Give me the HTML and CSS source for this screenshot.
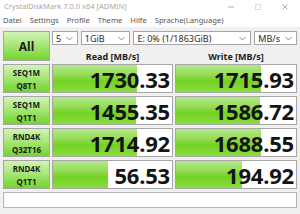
FILE: index.html
```html
<!DOCTYPE html>
<html>
<head>
<meta charset="utf-8">
<link rel="stylesheet" href="styles.css">
</head>
<body>
<div class="window">
  <div class="titlebar">
    <span class="title">CrystalDiskMark 7.0.0 x64 [ADMIN]</span>
    <div class="wincontrols">
      <svg class="wc" width="7" height="7" viewBox="0 0 7 7"><path d="M0 3.5H7" stroke="#a0a0a0" stroke-width="1"/></svg>
      <svg class="wc" width="7" height="7" viewBox="0 0 7 7"><rect x="0.5" y="0.5" width="6" height="6" fill="none" stroke="#dadada" stroke-width="1"/></svg>
      <svg class="wc" width="7" height="7" viewBox="0 0 7 7"><path d="M0.5 0.5L6.5 6.5M6.5 0.5L0.5 6.5" stroke="#a0a0a0" stroke-width="1"/></svg>
    </div>
  </div>
  <div class="menubar">
    <span>Datei</span><span>Settings</span><span>Profile</span><span>Theme</span><span>Hilfe</span><span>Sprache(Language)</span>
  </div>
  <div class="main">
    <div class="grid">
      <button class="btn all">All</button>
      <div class="controls">
        <div class="sel s1"><span>5</span><svg width="7" height="5" viewBox="0 0 7 5"><path d="M0.5 1L3.5 4L6.5 1" fill="none" stroke="#8a8a8a"/></svg></div>
        <div class="sel s2"><span>1GiB</span><svg width="7" height="5" viewBox="0 0 7 5"><path d="M0.5 1L3.5 4L6.5 1" fill="none" stroke="#8a8a8a"/></svg></div>
        <div class="sel s3"><span>E: 0% (1/1863GiB)</span><svg width="7" height="5" viewBox="0 0 7 5"><path d="M0.5 1L3.5 4L6.5 1" fill="none" stroke="#8a8a8a"/></svg></div>
        <div class="sel s4"><span>MB/s</span><svg width="7" height="5" viewBox="0 0 7 5"><path d="M0.5 1L3.5 4L6.5 1" fill="none" stroke="#8a8a8a"/></svg></div>
      </div>
      <div class="head">Read [MB/s]</div>
      <div class="head">Write [MB/s]</div>

      <button class="btn lbl">SEQ1M<br>Q8T1</button>
      <div class="cell"><div class="bar" style="width:70.6%"></div><span class="val">1730.33</span></div>
      <div class="cell"><div class="bar" style="width:70.6%"></div><span class="val">1715.93</span></div>

      <button class="btn lbl">SEQ1M<br>Q1T1</button>
      <div class="cell"><div class="bar" style="width:69.4%"></div><span class="val">1455.35</span></div>
      <div class="cell"><div class="bar" style="width:70.0%"></div><span class="val">1586.72</span></div>

      <button class="btn lbl">RND4K<br>Q32T16</button>
      <div class="cell"><div class="bar" style="width:70.6%"></div><span class="val">1714.92</span></div>
      <div class="cell"><div class="bar" style="width:70.5%"></div><span class="val">1688.55</span></div>

      <button class="btn lbl">RND4K<br>Q1T1</button>
      <div class="cell"><div class="bar" style="width:45.9%"></div><span class="val">56.53</span></div>
      <div class="cell"><div class="bar" style="width:54.8%"></div><span class="val">194.92</span></div>

      <div class="comment"></div>
    </div>
  </div>
</div>
</body>
</html>
```
FILE: styles.css
```css
* { box-sizing: border-box; }
html, body { margin: 0; padding: 0; }
body {
  width: 300px;
  height: 214px;
  overflow: hidden;
  background: #f0f0f0;
  font-family: "Noto Sans", "Open Sans", sans-serif;
}
.window {
  width: 300px;
  height: 214px;
  background: #f0f0f0;
}
.titlebar {
  height: 13px;
  background: #ffffff;
  display: flex;
  align-items: center;
  justify-content: space-between;
  padding-left: 4px;
  padding-right: 12px;
}
.title {
  font-size: 7.5px;
  color: #a8a8a8;
  line-height: 1;
}
.wincontrols {
  display: flex;
  gap: 21px;
  align-items: center;
  height: 13px;
}
.wc {
  width: 6px;
  height: 6px;
}
.menubar {
  height: 14px;
  background: #ffffff;
  display: flex;
  align-items: center;
  padding-left: 3px;
  gap: 8px;
  font-size: 7.6px;
  color: #555555;
}
.main {
  padding: 4px 3px 0 3px;
}
.grid {
  display: grid;
  grid-template-columns: 47px 121px 122px;
  grid-template-rows: 14px 13px 29px 29px 29px 29px 16px;
  column-gap: 2px;
  row-gap: 3px;
}
.grid > .head { margin-top: -3px; }
.btn {
  margin: 0;
  padding: 0;
  border: 1px solid #a6a6a6;
  background: linear-gradient(to bottom, #d2f4b6 0%, #a8e67a 45%, #72d52c 100%);
  font-family: "Noto Sans", "Open Sans", sans-serif;
  font-weight: bold;
  color: #1c1c1c;
  display: flex;
  align-items: center;
  justify-content: center;
  text-align: center;
}
.all {
  grid-row: 1 / 3;
  grid-column: 1;
  font-size: 12px;
}
.lbl {
  font-size: 8px;
  line-height: 13px;
}
.controls {
  grid-column: 2 / 4;
  grid-row: 1;
  display: flex;
  gap: 3px;
}
.sel {
  height: 14px;
  background: #ffffff;
  border: 1px solid #a6a6a6;
  display: flex;
  align-items: center;
  justify-content: space-between;
  padding: 0 4px 0 3px;
  font-size: 9px;
  color: #2a2a2a;
}
.s1 { width: 26px; }
.s2 { width: 50px; }
.s3 { width: 119px; }
.s4 { width: 43px; }
.head {
  font-size: 9px;
  font-weight: bold;
  color: #1c1c1c;
  text-align: center;
  display: flex;
  align-items: flex-end;
  justify-content: center;
  line-height: 1;
}
.cell {
  position: relative;
  background: #ffffff;
  border: 1px solid #a6a6a6;
  display: flex;
  align-items: center;
  justify-content: flex-end;
  overflow: hidden;
}
.bar {
  position: absolute;
  left: 0;
  top: 0;
  bottom: 0;
  background: linear-gradient(to bottom, #b4e88a 0%, #96dd58 35%, #74d220 60%, #8ade46 100%);
}
.val {
  position: relative;
  font-size: 22px;
  font-weight: bold;
  color: #141414;
  padding-right: 2px;
  line-height: 1;
  letter-spacing: -0.2px;
}
.comment {
  grid-column: 1 / 4;
  background: #ffffff;
  border: 1px solid #b4b4b4;
}
```
